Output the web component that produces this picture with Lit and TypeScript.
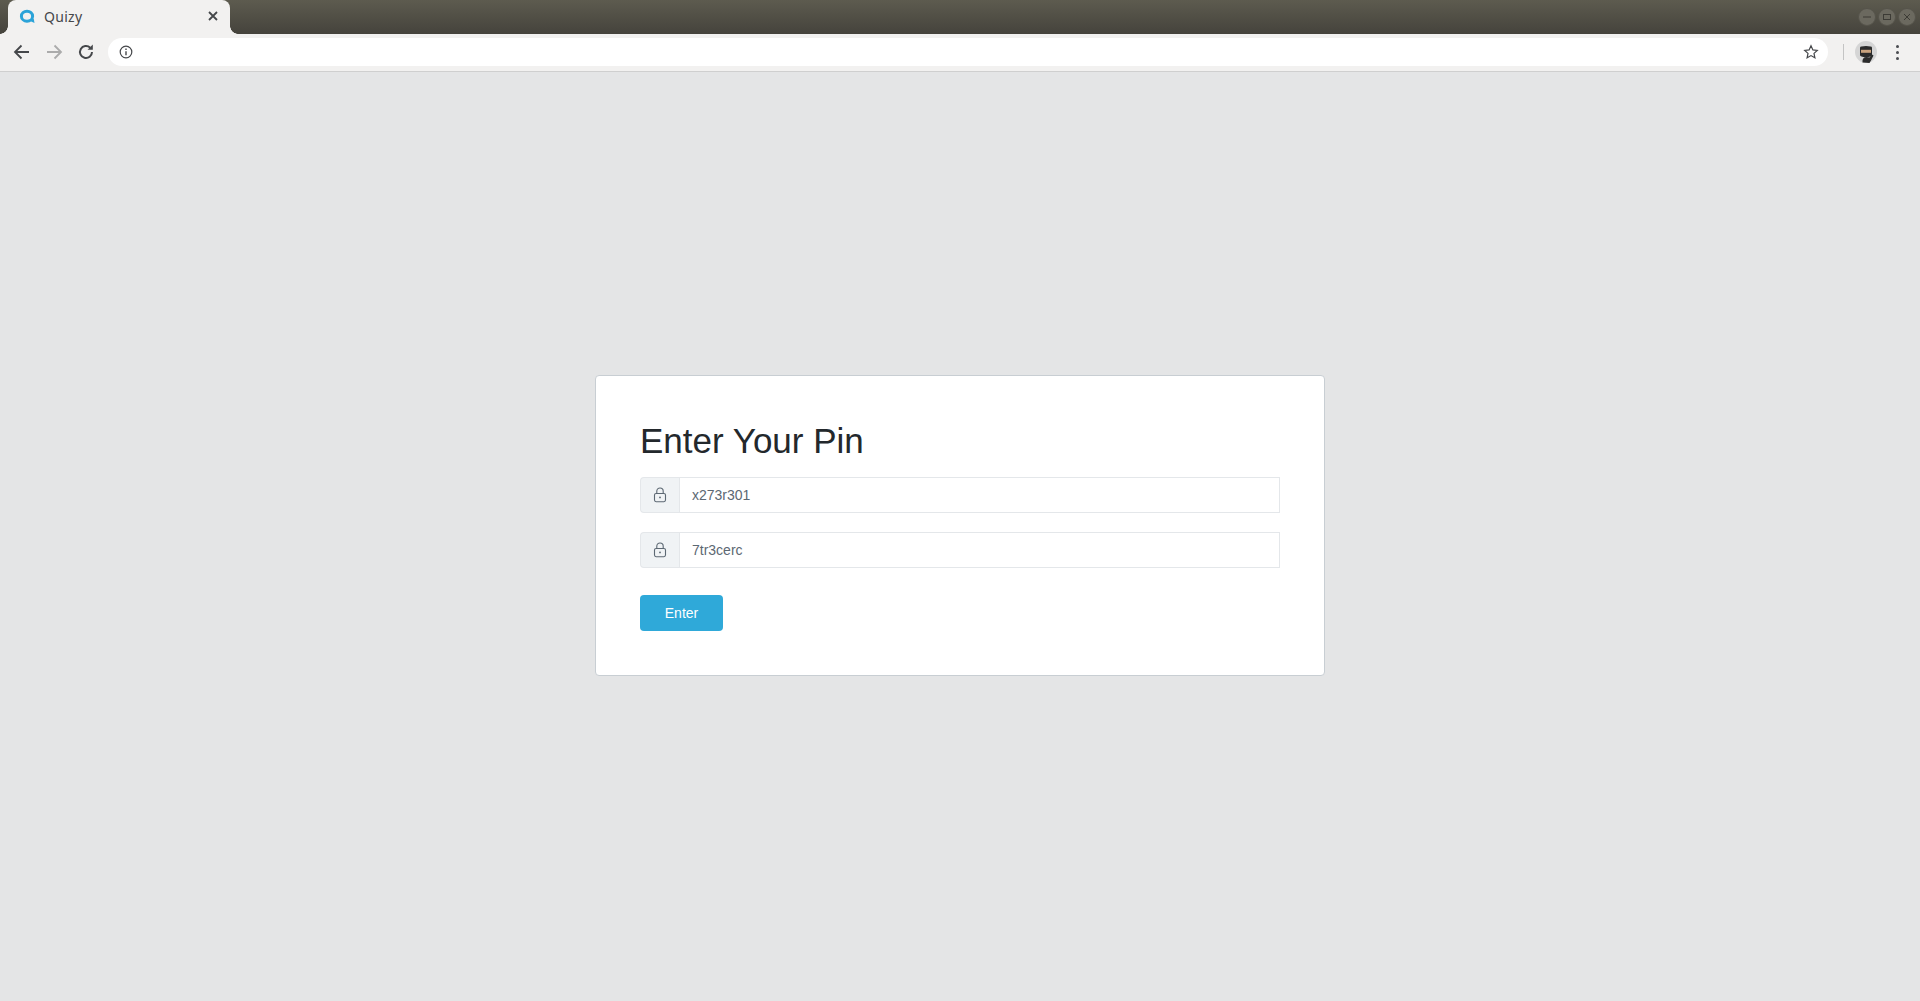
import { LitElement, html, css } from "lit";
import { customElement } from "lit/decorators.js";

const lock = html`<svg class="lock" width="14" height="16" viewBox="0 0 14 16" fill="none" stroke="#5c6873" stroke-width="1.1">
  <rect x="1.5" y="6.5" width="11" height="8.2" rx="1.6"></rect>
  <path d="M3.8 6.5V4.2a3.2 3.2 0 0 1 6.4 0V6.5"></path>
  <circle cx="7" cy="10.4" r="0.9" fill="#5c6873" stroke="none"></circle>
</svg>`;

@customElement("app-root")
export class AppRoot extends LitElement {
  static styles = css`
    :host { display: flex; flex-direction: column; height: 1001px; overflow: hidden; background: #e4e5e6; font-family: "Liberation Sans", Arial, sans-serif; color: #23282c; }
    .titlebar { height: 34px; flex: none; display: flex; align-items: flex-end; background: linear-gradient(#5d5b4f, #45433c); padding-left: 8px; box-sizing: border-box; position: relative; }
    .tab { width: 222px; height: 34px; background: #f2f1f0; border-radius: 8px 8px 0 0; display: flex; align-items: center; box-sizing: border-box; padding: 0 11px 2px 11px; position: relative; font: 14px "Noto Sans", "DejaVu Sans", sans-serif; color: #45474a; letter-spacing: 0.3px; }
    .tab::before, .tab::after { content: ""; position: absolute; bottom: 0; width: 8px; height: 8px; }
    .tab::before { left: -8px; background: radial-gradient(circle at 0 0, transparent 7.5px, #f2f1f0 8px); }
    .tab::after { right: -8px; background: radial-gradient(circle at 100% 0, transparent 7.5px, #f2f1f0 8px); }
    .fav { margin-right: 9px; flex: none; }
    .tab-title { flex: 1; }
    .winbtns { position: absolute; right: 4px; top: 8px; display: flex; gap: 2px; }
    .winbtn { width: 18px; height: 18px; box-sizing: border-box; border-radius: 50%; background: #6b695f; border: 1px solid #55534a; display: flex; align-items: center; justify-content: center; }
    .toolbar { height: 38px; flex: none; background: #f2f1f0; border-bottom: 1px solid #cfcfcf; box-sizing: border-box; display: flex; align-items: center; padding-bottom: 1px; }
    .navs { display: flex; align-items: center; width: 108px; flex: none; padding-left: 11px; box-sizing: border-box; gap: 10px; }
    .nav { width: 22px; height: 22px; display: block; flex: none; }
    .omni { width: 1720px; height: 28px; flex: none; background: #fff; border-radius: 14px; display: flex; align-items: center; justify-content: space-between; box-sizing: border-box; padding: 0 9px 0 11px; }
    .sep { width: 1px; height: 16px; background: #c4c4c4; margin-left: 15px; flex: none; }
    .avatar { margin-left: 11px; flex: none; width: 22px; height: 22px; }
    .dots { margin-left: 19px; flex: none; display: flex; flex-direction: column; gap: 3px; }
    .dots i { display: block; width: 3px; height: 3px; border-radius: 50%; background: #4a4c50; }
    main { flex: 1; display: flex; justify-content: center; align-items: flex-start; padding-top: 303px; }
    .card { width: 730px; height: 301px; box-sizing: border-box; background: #fff; border: 1px solid #c8ced3; border-radius: 4px; padding: 44px 44px 0; }
    h1 { margin: 0 0 15px; font-size: 35px; font-weight: 400; line-height: 42px; color: #23282c; }
    .group { display: flex; height: 36px; margin-bottom: 19px; box-sizing: border-box; }
    .addon { width: 39px; flex: none; box-sizing: border-box; background: #f0f3f5; border: 1px solid #e4e7ea; border-right: 0; border-radius: 4px 0 0 4px; display: flex; align-items: center; justify-content: center; }
    .lock { display: block; }
    .input { flex: 1; box-sizing: border-box; border: 1px solid #e4e7ea; display: flex; align-items: center; padding: 0 12px; font-size: 14px; color: #5c6873; }
    .btn { display: flex; align-items: center; justify-content: center; margin-top: 27px; width: 83px; height: 36px; box-sizing: border-box; border-radius: 4px; background: #2fa9d9; color: #fff; font-size: 14px; }
  `;

  render() {
    return html`
      <div class="titlebar">
        <div class="tab">
          <svg class="fav" width="16" height="16" viewBox="0 0 16 16" fill="none">
            <ellipse cx="8" cy="8.200" rx="5.600" ry="5" stroke="#2ba3d8" stroke-width="3"></ellipse>
            <path d="M9 12 L15.500 15 L14.800 11 Z" fill="#2ba3d8"></path>
          </svg>
          <span class="tab-title">Quizy</span>
          <svg width="12" height="12" viewBox="0 0 12 12" stroke="#45474a" stroke-width="1.8"><path d="M2 2l8 8M10 2l-8 8"></path></svg>
        </div>
        <div class="winbtns">
          <div class="winbtn"><svg width="10" height="10" viewBox="0 0 10 10" stroke="#3c3b35" stroke-width="1"><path d="M1 5h8"></path></svg></div>
          <div class="winbtn"><svg width="10" height="10" viewBox="0 0 10 10" fill="none" stroke="#3c3b35" stroke-width="1"><rect x="1.5" y="2.5" width="7" height="5"></rect></svg></div>
          <div class="winbtn"><svg width="10" height="10" viewBox="0 0 10 10" stroke="#3c3b35" stroke-width="1"><path d="M2 2l6 6M8 2l-6 6"></path></svg></div>
        </div>
      </div>
      <div class="toolbar">
        <div class="navs">
          <svg class="nav" viewBox="0 0 22 22" fill="none" stroke="#45474a" stroke-width="1.8"><path d="M18 11H4.500M10.500 4.500L4 11l6.500 6.500"></path></svg>
          <svg class="nav" viewBox="0 0 22 22" fill="none" stroke="#ababab" stroke-width="1.8"><path d="M4 11h13.500M11.500 4.500L18 11l-6.500 6.500"></path></svg>
          <svg class="nav" viewBox="0 0 22 22" fill="none" stroke="#45474a" stroke-width="2"><path d="M17 11a6 6 0 1 1-1.800-4.300"></path><path d="M17.800 3.600v5.200h-5.200" fill="#45474a" stroke="none"></path></svg>
        </div>
        <div class="omni">
          <svg width="14" height="14" viewBox="0 0 14 14" fill="none" stroke="#45474a" stroke-width="1.2"><circle cx="7" cy="7" r="5.800"></circle><path d="M7 6.200v4" stroke-width="1.400"></path><path d="M7 3.600v1.400" stroke-width="1.400"></path></svg>
          <svg width="16" height="16" viewBox="0 0 16 16" fill="none" stroke="#45474a" stroke-width="1.2"><path d="M8 1.800l1.900 4.100 4.400.5-3.300 3 .9 4.400L8 11.600l-3.900 2.200.9-4.400-3.300-3 4.400-.5z"></path></svg>
        </div>
        <div class="sep"></div>
        <svg class="avatar" viewBox="0 0 22 22">
          <circle cx="11" cy="11" r="11" fill="#d5d5d5"></circle>
          <path d="M5 6.500Q5 5 11 5t6 1.500v7.500q0 2-6 2t-6-2z" fill="#2b2b2b"></path>
          <rect x="6" y="8.800" width="10" height="3" fill="#c9a27e"></rect>
          <path d="M7.500 21.500q-.5-5.500 4-5.500l3 .5 2.500-3 1.500 1-2.500 5-1.500 2.500z" fill="#2b2b2b"></path>
        </svg>
        <div class="dots"><i></i><i></i><i></i></div>
      </div>
      <main>
        <div class="card">
          <h1>Enter Your Pin</h1>
          <div class="group"><div class="addon">${lock}</div><div class="input">x273r301</div></div>
          <div class="group"><div class="addon">${lock}</div><div class="input">7tr3cerc</div></div>
          <div class="btn">Enter</div>
        </div>
      </main>
    `;
  }
}
